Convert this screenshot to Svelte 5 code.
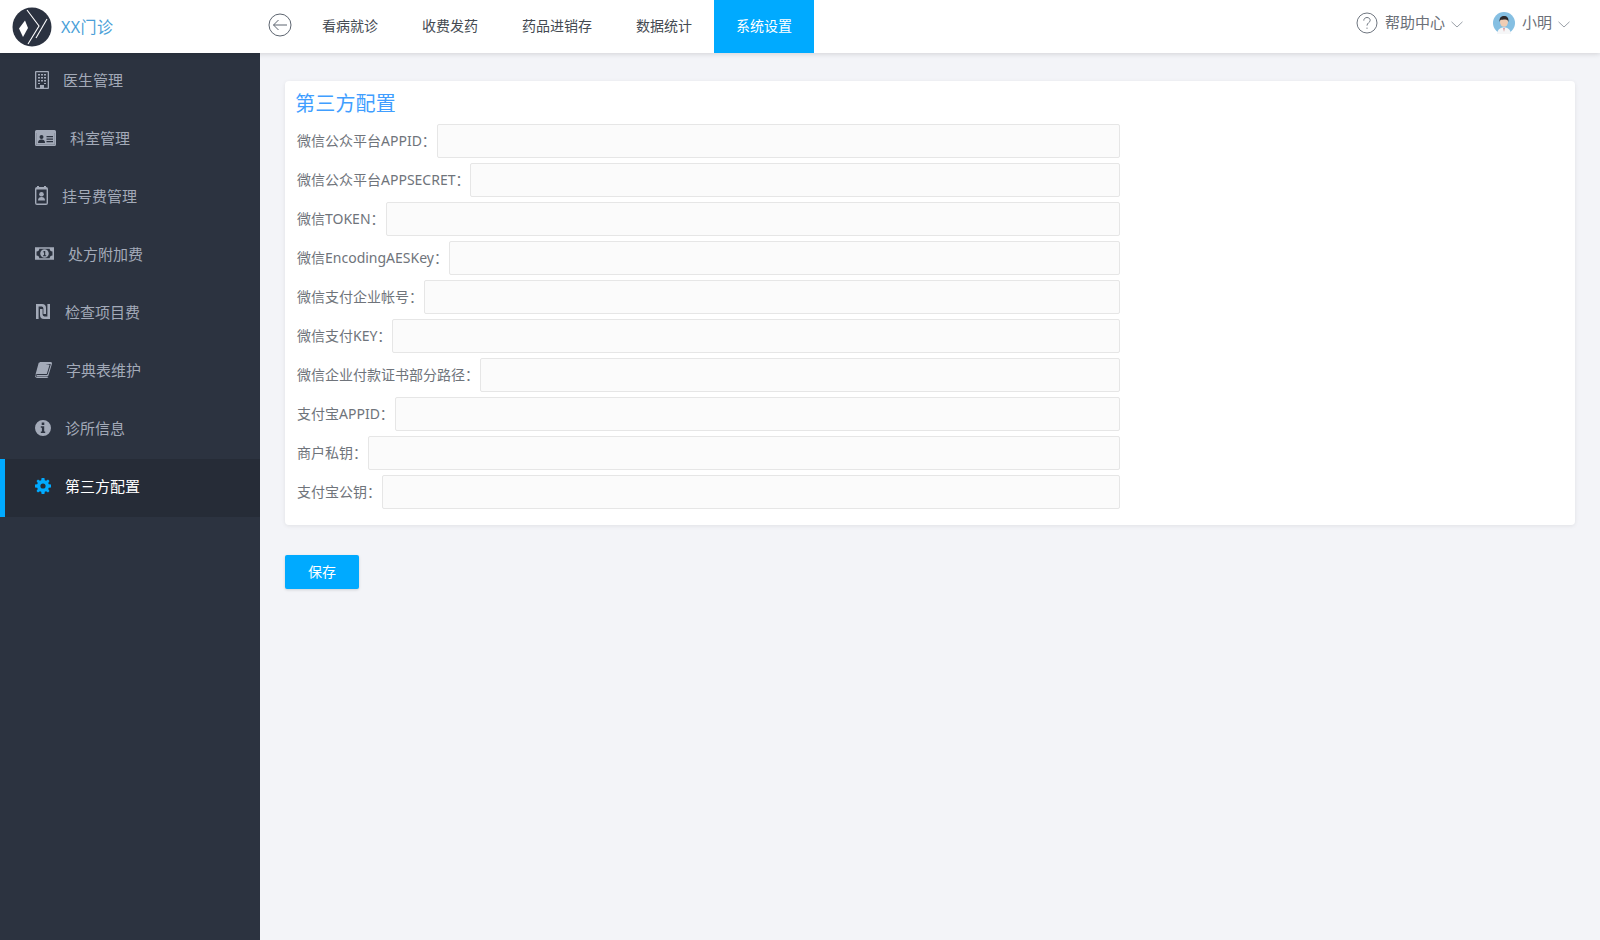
<script>
	const navItems = ['看病就诊', '收费发药', '药品进销存', '数据统计', '系统设置'];
	const activeNav = '系统设置';

	const menu = [
		{ label: '医生管理', icon: 'building' },
		{ label: '科室管理', icon: 'card' },
		{ label: '挂号费管理', icon: 'badge' },
		{ label: '处方附加费', icon: 'money' },
		{ label: '检查项目费', icon: 'ils' },
		{ label: '字典表维护', icon: 'book' },
		{ label: '诊所信息', icon: 'info' },
		{ label: '第三方配置', icon: 'gear', active: true }
	];

	const fields = [
		'微信公众平台APPID',
		'微信公众平台APPSECRET',
		'微信TOKEN',
		'微信EncodingAESKey',
		'微信支付企业帐号',
		'微信支付KEY',
		'微信企业付款证书部分路径',
		'支付宝APPID',
		'商户私钥',
		'支付宝公钥'
	];
</script>

<div class="page">
	<header class="topbar">
		<div class="brand">
			<svg class="logo" width="40" height="40" viewBox="0 0 40 40">
				<circle cx="20" cy="20" r="19.5" fill="#2b3240" />
				<path d="M7 21.5 L13 13.5 L16 21 L11 30 Z" fill="#fff" />
				<path d="M15 3 L27 19 L16 37" fill="none" stroke="#fff" stroke-width="1.1" />
				<path d="M35 12 L24 31" fill="none" stroke="#fff" stroke-width="1.1" />
			</svg>
			<span class="brand-name">XX门诊</span>
		</div>

		<button class="back" aria-label="返回">
			<svg width="24" height="24" viewBox="0 0 24 24" fill="none" stroke="#5d6570" stroke-width="1">
				<circle cx="12" cy="12" r="11" />
				<path d="M19 12 H5.5 M10.5 7 L5.5 12 L10.5 17" />
			</svg>
		</button>

		<nav class="nav">
			{#each navItems as item}
				<a href="#top" class="nav-item" class:active={item === activeNav}>{item}</a>
			{/each}
		</nav>

		<div class="top-right">
			<div class="drop help">
				<svg width="22" height="22" viewBox="0 0 22 22" fill="none" stroke="#6f7680" stroke-width="1">
					<circle cx="11" cy="11" r="10" />
					<path d="M7.8 8.6 C7.8 6.6 9.3 5.5 11 5.5 C12.8 5.5 14.2 6.7 14.2 8.3 C14.2 10.6 11 10.8 11 13.6 M11 15.6 V16.8" />
				</svg>
				<span>帮助中心</span>
				<svg class="chev" width="12" height="7" viewBox="0 0 12 7" fill="none" stroke="#9aa0a8" stroke-width="1">
					<path d="M0.5 0.8 L6 6 L11.5 0.8" />
				</svg>
			</div>
			<div class="drop user">
				<svg class="avatar" width="22" height="22" viewBox="0 0 22 22">
					<circle cx="11" cy="11" r="11" fill="#85bfe2" />
					<path d="M4 22 C4.5 17 7.5 15.5 11 15.5 C14.5 15.5 17.5 17 18 22 Z" fill="#f5f6f7" />
					<path d="M10.4 16 L11 20 L11.6 16 Z" fill="#c9636a" />
					<ellipse cx="11" cy="10" rx="4" ry="4.8" fill="#f0cdb4" />
					<path d="M6.6 10 C6 5.5 8.5 4 11 4 C14 4 16 5.8 15.4 10 C14.8 8 14 7.4 12.5 7.4 C10.5 7.6 8.2 7.4 7.4 8 C7 8.5 6.8 9.2 6.6 10 Z" fill="#2d2a2c" />
				</svg>
				<span>小明</span>
				<svg class="chev" width="12" height="7" viewBox="0 0 12 7" fill="none" stroke="#9aa0a8" stroke-width="1">
					<path d="M0.5 0.8 L6 6 L11.5 0.8" />
				</svg>
			</div>
		</div>
	</header>

	<div class="body">
		<aside class="sidebar">
			{#each menu as item}
				<a href="#top" class="menu-item" class:active={item.active}>
					{#if item.icon === 'building'}
						<svg width="14" height="18" viewBox="0 0 14 18">
							<path fill-rule="evenodd" d="M1 0 H13 A1 1 0 0 1 14 1 V17 A1 1 0 0 1 13 18 H1 A1 1 0 0 1 0 17 V1 A1 1 0 0 1 1 0 Z M1.3 1.3 V16.7 H5 V14 H9 V16.7 H12.7 V1.3 Z" fill="currentColor" />
							<path d="M3 3 H5 V4.6 H3 Z M6 3 H8 V4.6 H6 Z M9 3 H11 V4.6 H9 Z M3 6 H5 V7.6 H3 Z M6 6 H8 V7.6 H6 Z M9 6 H11 V7.6 H9 Z M3 9 H5 V10.6 H3 Z M6 9 H8 V10.6 H6 Z M9 9 H11 V10.6 H9 Z M3 12 H5 V13 H3 Z M9 12 H11 V13 H9 Z" fill="currentColor" />
						</svg>
					{:else if item.icon === 'card'}
						<svg width="21" height="16" viewBox="0 0 21 16">
							<path fill-rule="evenodd" d="M1.5 0 H19.5 A1.5 1.5 0 0 1 21 1.5 V14.5 A1.5 1.5 0 0 1 19.5 16 H1.5 A1.5 1.5 0 0 1 0 14.5 V1.5 A1.5 1.5 0 0 1 1.5 0 Z M1.2 3 V14.8 H19.8 V3 Z" fill="currentColor" />
							<path fill-rule="evenodd" d="M1.2 3 H19.8 V14.8 H1.2 Z M6.5 5 A2 2 0 1 0 6.5 9 A2 2 0 1 0 6.5 5 Z M3 13 H10 C10 10.5 8.5 9.6 6.5 9.6 C4.5 9.6 3 10.5 3 13 Z M11.5 6 V7.2 H18 V6 Z M11.5 8.5 V9.7 H18 V8.5 Z M11.5 11 V12.2 H18 V11 Z" fill="currentColor" />
						</svg>
					{:else if item.icon === 'badge'}
						<svg width="13" height="19" viewBox="0 0 13 19">
							<path fill-rule="evenodd" d="M2 1 H11 A2 2 0 0 1 13 3 V17 A2 2 0 0 1 11 19 H2 A2 2 0 0 1 0 17 V3 A2 2 0 0 1 2 1 Z M1.4 3.4 V17.6 H11.6 V3.4 Z" fill="currentColor" />
							<path d="M2 0 H4 V2 H2 Z M9 0 H11 V2 H9 Z" fill="currentColor" />
							<circle cx="6.5" cy="8.2" r="2.3" fill="currentColor" />
							<path d="M3 14.5 C3 12 4.5 11 6.5 11 C8.5 11 10 12 10 14.5 Z" fill="currentColor" />
						</svg>
					{:else if item.icon === 'money'}
						<svg width="19" height="13" viewBox="0 0 20 13">
							<path fill-rule="evenodd" d="M0 0 H20 V13 H0 Z M4.5 1.6 A3 3 0 0 1 1.6 4.5 V8.5 A3 3 0 0 1 4.5 11.4 H15.5 A3 3 0 0 1 18.4 8.5 V4.5 A3 3 0 0 1 15.5 1.6 Z" fill="currentColor" />
							<path fill-rule="evenodd" d="M10 2 A4.5 4.5 0 1 0 10 11 A4.5 4.5 0 1 0 10 2 Z M9.6 3.8 H10.8 V8.4 H11.8 V9.3 H8.4 V8.4 H9.5 V5 L8.6 5.5 L8.2 4.8 Z" fill="currentColor" />
						</svg>
					{:else if item.icon === 'ils'}
						<svg width="16" height="15" viewBox="0 0 14 15">
							<path d="M0 0 H6 A4 4 0 0 1 10 4 V10 H7.4 V4.4 A1.8 1.8 0 0 0 5.6 2.6 H2.6 V15 H0 Z" fill="currentColor" />
							<path d="M14 15 H8 A4 4 0 0 1 4 11 V5 H6.6 V10.6 A1.8 1.8 0 0 0 8.4 12.4 H11.4 V0 H14 Z" fill="currentColor" />
						</svg>
					{:else if item.icon === 'book'}
						<svg width="17" height="16" viewBox="0 0 17 16">
							<path d="M4.4 0 H15.6 C16.7 0 17.2 0.9 16.9 1.9 L13.6 13 C13.3 14 12.6 14.6 11.6 14.6 H2.6 C1.6 14.6 1.2 14.1 1.5 13.6 C1.8 13.1 2.4 13 3.2 13 H11.6 C12.3 13 12.6 12.7 12.8 12.1 L15.6 2.9 L15.6 2 L5 2 Z" fill="currentColor" />
							<path d="M3.7 0.8 L14.6 2.8 L11.8 12 H2.6 C1.8 12 1.2 12.3 0.8 12.8 L0.5 12.4 Z" fill="currentColor" />
							<path d="M0 13.5 C0 15 1 16 2.4 16 H11.6 C12.4 16 13 15.5 13.4 15 H2.4 C1.4 15 0.9 14.5 0.8 13.5 Z" fill="currentColor" />
						</svg>
					{:else if item.icon === 'info'}
						<svg width="16" height="16" viewBox="0 0 16 16">
							<path fill-rule="evenodd" d="M8 0 A8 8 0 1 1 8 16 A8 8 0 1 1 8 0 Z M6.7 2.6 V5 H9.3 V2.6 Z M5.8 6.3 V7.8 H6.9 V11.4 H5.8 V12.9 H10.2 V11.4 H9.2 V6.3 Z" fill="currentColor" />
						</svg>
					{:else}
						<svg width="16" height="16" viewBox="0 0 16 16">
							<path fill-rule="evenodd" d="M6.6 0 H9.4 L9.8 2.2 L11.1 2.8 L13 1.5 L14.5 3 L13.2 4.9 L13.8 6.2 L16 6.6 V9.4 L13.8 9.8 L13.2 11.1 L14.5 13 L13 14.5 L11.1 13.2 L9.8 13.8 L9.4 16 H6.6 L6.2 13.8 L4.9 13.2 L3 14.5 L1.5 13 L2.8 11.1 L2.2 9.8 L0 9.4 V6.6 L2.2 6.2 L2.8 4.9 L1.5 3 L3 1.5 L4.9 2.8 L6.2 2.2 Z M8 5.4 A2.6 2.6 0 1 0 8 10.6 A2.6 2.6 0 1 0 8 5.4 Z" fill="currentColor" />
						</svg>
					{/if}
					<span>{item.label}</span>
				</a>
			{/each}
		</aside>

		<main class="content">
			<section class="card">
				<h2 class="card-title">第三方配置</h2>
				<div class="form">
					{#each fields as field}
						<div class="row">
							<label class="row-label" for={field}>{field}：</label>
							<input id={field} class="row-input" type="text" />
						</div>
					{/each}
				</div>
			</section>
			<button class="save">保存</button>
		</main>
	</div>
</div>

<style>
	:global(body) {
		margin: 0;
		background: #f3f4f8;
	}

	.page {
		display: flex;
		flex-direction: column;
		height: 940px;
		overflow: hidden;
		font-family: "Noto Sans", "Noto Sans CJK SC", sans-serif;
		font-size: 14px;
		color: #6b7078;
	}

	.topbar {
		display: flex;
		align-items: stretch;
		flex: none;
		height: 53px;
		background: #fff;
		box-shadow: 0 1px 5px rgba(0, 0, 0, 0.14);
		position: relative;
		z-index: 2;
	}

	.brand {
		display: flex;
		align-items: center;
		width: 268px;
		flex: none;
		padding-left: 12px;
		box-sizing: border-box;
	}

	.logo {
		margin-top: 1px;
	}

	.brand-name {
		margin-left: 9px;
		font-size: 16px;
		letter-spacing: 0.4px;
		color: #4a9fd8;
		padding-bottom: 2px;
	}

	.back {
		align-self: center;
		width: 24px;
		height: 24px;
		margin-top: -3px;
		padding: 0;
		border: 0;
		background: none;
		display: flex;
	}

	.nav {
		display: flex;
		margin-left: 8px;
	}

	.nav-item {
		display: flex;
		align-items: center;
		padding: 0 22px 4px;
		color: #444a52;
		text-decoration: none;
	}

	.nav-item.active {
		background: #00aaff;
		color: #fff;
	}

	.top-right {
		display: flex;
		margin-left: auto;
		padding: 0 30px 7px 0;
		gap: 30px;
		align-items: center;
		font-size: 15px;
	}

	.drop {
		display: flex;
		align-items: center;
	}

	.drop span {
		margin-left: 7px;
		margin-top: -3px;
	}

	.chev {
		margin-left: 6px;
		margin-top: 2px;
	}

	.body {
		display: flex;
		flex: 1;
		min-height: 0;
	}

	.sidebar {
		width: 260px;
		flex: none;
		background: #2c3340;
	}

	.menu-item {
		display: flex;
		align-items: center;
		height: 58px;
		padding: 0 0 5px 35px;
		box-sizing: border-box;
		gap: 14px;
		font-size: 15px;
		color: #a3aab8;
		text-decoration: none;
	}

	.menu-item svg {
		flex: none;
	}

	.menu-item.active {
		background: #262c37;
		color: #fff;
		padding-left: 30px;
		border-left: 5px solid #00aaff;
	}

	.menu-item.active svg {
		color: #00aaff;
	}

	.content {
		flex: 1;
		min-width: 0;
		padding: 28px 25px 0 25px;
	}

	.card {
		background: #fff;
		border-radius: 4px;
		box-shadow: 0 1px 4px rgba(0, 0, 0, 0.08);
		padding: 8px 12px 16px 10px;
		height: 444px;
		box-sizing: border-box;
	}

	.card-title {
		margin: 0;
		font-size: 20px;
		font-weight: 400;
		line-height: 30px;
		letter-spacing: 0.2px;
		color: #409eff;
	}

	.form {
		display: flex;
		flex-direction: column;
		gap: 5px;
		width: 824px;
		margin: 5px 0 0 1px;
	}

	.row {
		display: flex;
		align-items: center;
		padding-left: 1px;
	}

	.row-label {
		flex: none;
		white-space: nowrap;
		margin-right: 1px;
		padding-bottom: 2px;
		color: #6f747b;
	}

	.row-input {
		flex: 1;
		min-width: 0;
		height: 34px;
		box-sizing: border-box;
		border: 1px solid #e6e6e6;
		border-radius: 2px;
		background: #fbfbfb;
		outline: none;
	}

	.save {
		display: block;
		width: 74px;
		height: 34px;
		margin-top: 30px;
		padding: 0 0 2px;
		border: 0;
		border-radius: 2px;
		background: #00aaff;
		color: #fff;
		font-family: inherit;
		font-size: 14px;
		box-shadow: 0 1px 3px rgba(0, 0, 0, 0.15);
	}
</style>
